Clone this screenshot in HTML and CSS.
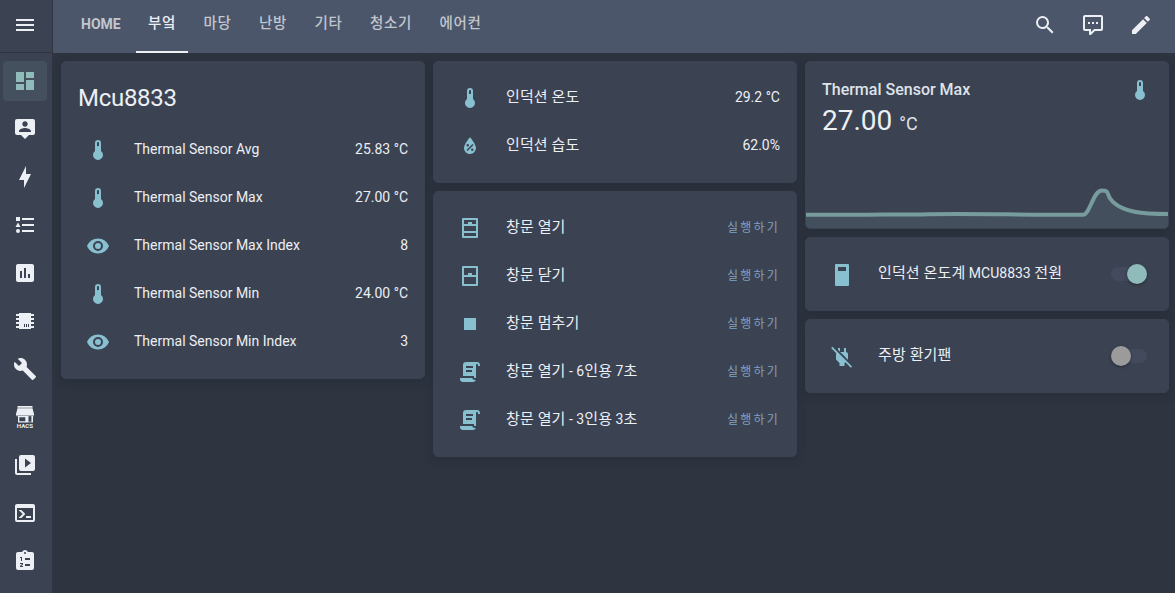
FILE: index.html
```
<!DOCTYPE html>
<html lang="ko">
<head>
    <meta charset="UTF-8">
    <meta name="viewport" content="width=device-width, initial-scale=1.0">
    <title>Home Assistant</title>
    <link rel="stylesheet" href="styles.css">
</head>
<body>
    <!-- shared icons -->
    <svg class="icon-defs">
        <symbol id="thermometer" viewBox="0 0 24 24"><path d="M15 13V5A3 3 0 0 0 9 5V13A5 5 0 1 0 15 13M12 4A1 1 0 0 1 13 5V8H11V5A1 1 0 0 1 12 4Z"/></symbol>
        <symbol id="eye" viewBox="0 0 24 24"><path d="M12,9A3,3 0 0,0 9,12A3,3 0 0,0 12,15A3,3 0 0,0 15,12A3,3 0 0,0 12,9M12,17A5,5 0 0,1 7,12A5,5 0 0,1 12,7A5,5 0 0,1 17,12A5,5 0 0,1 12,17M12,4.5C7,4.5 2.73,7.61 1,12C2.73,16.39 7,19.5 12,19.5C17,19.5 21.27,16.39 23,12C21.27,7.61 17,4.5 12,4.5Z"/></symbol>
        <symbol id="script" viewBox="0 0 24 24"><path d="M17.8,20C17.4,21.2 16.3,22 15,22H5C3.3,22 2,20.7 2,19V18H5L14.2,18C14.6,19.2 15.7,20 17,20H17.8M19,2C20.7,2 22,3.3 22,5V6H20V5C20,4.4 19.6,4 19,4C18.4,4 18,4.4 18,5V18H17C16.4,18 16,17.6 16,17V16H5V5C5,3.3 6.3,2 8,2H19M8,6V8H15V6H8M8,10V12H14V10H8Z"/></symbol>
    </svg>

    <div class="app">
        <aside class="sidebar">
            <div class="menu">
                <svg class="icon" viewBox="0 0 24 24"><path d="M3,6H21V8H3V6M3,11H21V13H3V11M3,16H21V18H3V16Z"/></svg>
            </div>
            <nav class="side-nav">
                <a class="side-item active"><svg class="icon" viewBox="0 0 24 24"><path d="M13,3V9H21V3M13,21H21V11H13M3,21H11V15H3M3,13H11V3H3V13Z"/></svg></a>
                <a class="side-item"><svg class="icon" viewBox="0 0 24 24"><path d="M20,2H4A2,2 0 0,0 2,4V16A2,2 0 0,0 4,18H8L12,22L16,18H20A2,2 0 0,0 22,16V4A2,2 0 0,0 20,2M12,4.3C13.5,4.3 14.7,5.5 14.7,7C14.7,8.5 13.5,9.7 12,9.7C10.5,9.7 9.3,8.5 9.3,7C9.3,5.5 10.5,4.3 12,4.3M18,15H6V14.1C6,12.1 10,11 12,11C14,11 18,12.1 18,14.1V15Z"/></svg></a>
                <a class="side-item"><svg class="icon" viewBox="0 0 24 24"><path d="M11 15H6L13 1V9H18L11 23V15Z"/></svg></a>
                <a class="side-item"><svg class="icon" viewBox="0 0 24 24"><path d="M5,9.5L7.5,14H2.5L5,9.5M3,4H7V8H3V4M5,20A2,2 0 0,0 7,18A2,2 0 0,0 5,16A2,2 0 0,0 3,18A2,2 0 0,0 5,20M9,5V7H21V5H9M9,19H21V17H9V19M9,13H21V11H9V13Z"/></svg></a>
                <a class="side-item"><svg class="icon" viewBox="0 0 24 24"><path d="M9 17H7V10H9V17M13 17H11V7H13V17M17 17H15V13H17V17M19 3H5C3.89 3 3 3.89 3 5V19C3 20.11 3.9 21 5 21H19C20.11 21 21 20.11 21 19V5C21 3.89 20.11 3 19 3Z"/></svg></a>
                <a class="side-item"><svg class="icon" viewBox="0 0 24 24"><path d="M6,4H18V5H21V7H18V9H21V11H18V13H21V15H18V17H21V19H18V20H6V19H3V17H6V15H3V13H6V11H3V9H6V7H3V5H6V4M11,15V18H12V15H11M13,15V18H14V15H13M15,15V18H16V15H15Z"/></svg></a>
                <a class="side-item"><svg class="icon" viewBox="0 0 24 24"><path d="M22.7,19L13.6,9.9C14.5,7.6 14,4.9 12.1,3C10.1,1 7.1,0.6 4.7,1.7L9,6L6,9L1.6,4.7C0.4,7.1 0.9,10.1 2.9,12.1C4.8,14 7.5,14.5 9.8,13.6L18.9,22.7C19.3,23.1 19.9,23.1 20.3,22.7L22.6,20.4C23.1,20 23.1,19.3 22.7,19Z"/></svg></a>
                <a class="side-item">
                    <svg class="icon" viewBox="0 0 24 24">
                        <path fill-rule="evenodd" d="M4.5,1H19.5V2.7H4.5ZM4.5,3.3H19.5L21,9V10H3V9ZM5,11H15.5V17.4H5ZM6.3,12.3V16.2H12.3V12.3ZM18.4,11H20V17.4H18.4Z"/>
                        <path class="shade" d="M3,10H21V11.2H3ZM15.5,16.4H18.4V17.4H15.5Z"/>
                        <text class="hacs" x="12" y="23.2">HACS</text>
                    </svg>
                </a>
                <a class="side-item"><svg class="icon" viewBox="0 0 24 24"><path d="M4,6H2V20A2,2 0 0,0 4,22H18V20H4V6M20,2H8A2,2 0 0,0 6,4V16A2,2 0 0,0 8,18H20A2,2 0 0,0 22,16V4A2,2 0 0,0 20,2M12,14.5V5.5L18,10L12,14.5Z"/></svg></a>
                <a class="side-item"><svg class="icon" viewBox="0 0 24 24"><path d="M20,19V7H4V19H20M20,3A2,2 0 0,1 22,5V19A2,2 0 0,1 20,21H4A2,2 0 0,1 2,19V5C2,3.89 2.9,3 4,3H20M13,17V15H18V17H13M9.58,13L5.57,9H8.4L11.7,12.3C12.09,12.69 12.09,13.33 11.7,13.72L8.42,17H5.59L9.58,13Z"/></svg></a>
                <a class="side-item">
                    <svg class="icon" viewBox="0 0 24 24">
                        <path fill-rule="evenodd" d="M19,3H14.82C14.4,1.84 13.3,1 12,1C10.7,1 9.6,1.84 9.18,3H5A2,2 0 0,0 3,5V19A2,2 0 0,0 5,21H19A2,2 0 0,0 21,19V5A2,2 0 0,0 19,3M12,3A1,1 0 0,1 12,5A1,1 0 0,1 12,3M12,9H17V11H12ZM12,15H17V17H12ZM7,8H9V12H8V9H7ZM7,14H10V15.6L8.3,17H10V18H7V17L9,15H7Z"/>
                    </svg>
                </a>
            </nav>
        </aside>

        <div class="main">
            <header class="toolbar">
                <nav class="tabs">
                    <a class="tab latin">HOME</a>
                    <a class="tab selected">부엌</a>
                    <a class="tab">마당</a>
                    <a class="tab">난방</a>
                    <a class="tab">기타</a>
                    <a class="tab">청소기</a>
                    <a class="tab">에어컨</a>
                </nav>
                <div class="actions">
                    <svg class="icon" viewBox="0 0 24 24"><path d="M9.5,3A6.5,6.5 0 0,1 16,9.5C16,11.11 15.41,12.59 14.44,13.73L14.71,14H15.5L20.5,19L19,20.5L14,15.5V14.71L13.73,14.44C12.59,15.41 11.11,16 9.5,16A6.5,6.5 0 0,1 3,9.5A6.5,6.5 0 0,1 9.5,3M9.5,5C7,5 5,7 5,9.5C5,12 7,14 9.5,14C12,14 14,12 14,9.5C14,7 12,5 9.5,5Z"/></svg>
                    <svg class="icon" viewBox="0 0 24 24"><path d="M9,22A1,1 0 0,1 8,21V18H4A2,2 0 0,1 2,16V4C2,2.89 2.9,2 4,2H20A2,2 0 0,1 22,4V16A2,2 0 0,1 20,18H13.9L10.2,21.71C10,21.9 9.75,22 9.5,22V22H9M10,16V19.08L13.08,16H20V4H4V16H10M17,11H15V9H17V11M13,11H11V9H13V11M9,11H7V9H9V11Z"/></svg>
                    <svg class="icon" viewBox="0 0 24 24"><path d="M20.71,7.04C21.1,6.65 21.1,6 20.71,5.63L18.37,3.29C18,2.9 17.35,2.9 16.96,3.29L15.12,5.12L18.87,8.87M3,17.25V21H6.75L17.81,9.93L14.06,6.18L3,17.25Z"/></svg>
                </div>
            </header>

            <main class="columns">
                <div class="column">
                    <section class="card">
                        <h1 class="card-title">Mcu8833</h1>
                        <div class="rows">
                            <div class="row"><span class="badge"><svg class="icon"><use href="#thermometer"/></svg></span><span class="name">Thermal Sensor Avg</span><span class="value">25.83 °C</span></div>
                            <div class="row"><span class="badge"><svg class="icon"><use href="#thermometer"/></svg></span><span class="name">Thermal Sensor Max</span><span class="value">27.00 °C</span></div>
                            <div class="row"><span class="badge"><svg class="icon"><use href="#eye"/></svg></span><span class="name">Thermal Sensor Max Index</span><span class="value">8</span></div>
                            <div class="row"><span class="badge"><svg class="icon"><use href="#thermometer"/></svg></span><span class="name">Thermal Sensor Min</span><span class="value">24.00 °C</span></div>
                            <div class="row"><span class="badge"><svg class="icon"><use href="#eye"/></svg></span><span class="name">Thermal Sensor Min Index</span><span class="value">3</span></div>
                        </div>
                    </section>
                </div>

                <div class="column">
                    <section class="card">
                        <div class="rows">
                            <div class="row"><span class="badge"><svg class="icon"><use href="#thermometer"/></svg></span><span class="name"><span class="ko">인덕션 온도</span></span><span class="value">29.2 °C</span></div>
                            <div class="row"><span class="badge"><svg class="icon" viewBox="0 0 24 24"><path d="M12,3.25C12,3.25 6,10 6,14C6,17.32 8.69,20 12,20A6,6 0 0,0 18,14C18,10 12,3.25 12,3.25M14.47,9.97L15.53,11.03L9.53,17.03L8.47,15.97M9.75,10A1.25,1.25 0 0,1 11,11.25A1.25,1.25 0 0,1 9.75,12.5A1.25,1.25 0 0,1 8.5,11.25A1.25,1.25 0 0,1 9.75,10M14.25,14.5A1.25,1.25 0 0,1 15.5,15.75A1.25,1.25 0 0,1 14.25,17A1.25,1.25 0 0,1 13,15.75A1.25,1.25 0 0,1 14.25,14.5Z"/></svg></span><span class="name"><span class="ko">인덕션 습도</span></span><span class="value">62.0%</span></div>
                        </div>
                    </section>
                    <section class="card">
                        <div class="rows">
                            <div class="row"><span class="badge"><svg class="icon" viewBox="0 0 24 24"><path fill-rule="evenodd" d="M5,2H19A1,1 0 0,1 20,3V21A1,1 0 0,1 19,22H5A1,1 0 0,1 4,21V3A1,1 0 0,1 5,2M6,4V8H10V6H14V8H18V4ZM6,10V15H18V10ZM6,17V20H18V17Z"/></svg></span><span class="name"><span class="ko">창문 열기</span></span><span class="run">실행하기</span></div>
                            <div class="row"><span class="badge"><svg class="icon" viewBox="0 0 24 24"><path fill-rule="evenodd" d="M5,2H19A1,1 0 0,1 20,3V21A1,1 0 0,1 19,22H5A1,1 0 0,1 4,21V3A1,1 0 0,1 5,2M6,4V11H10V9H14V11H18V4ZM6,13V20H18V13Z"/></svg></span><span class="name"><span class="ko">창문 닫기</span></span><span class="run">실행하기</span></div>
                            <div class="row"><span class="badge"><svg class="icon" viewBox="0 0 24 24"><path d="M18,18H6V6H18V18Z"/></svg></span><span class="name"><span class="ko">창문 멈추기</span></span><span class="run">실행하기</span></div>
                            <div class="row"><span class="badge"><svg class="icon"><use href="#script"/></svg></span><span class="name"><span class="ko">창문 열기</span> - 6<span class="ko">인용</span> 7<span class="ko">초</span></span><span class="run">실행하기</span></div>
                            <div class="row"><span class="badge"><svg class="icon"><use href="#script"/></svg></span><span class="name"><span class="ko">창문 열기</span> - 3<span class="ko">인용</span> 3<span class="ko">초</span></span><span class="run">실행하기</span></div>
                        </div>
                    </section>
                </div>

                <div class="column">
                    <section class="card sensor">
                        <div class="sensor-header">
                            <span class="sensor-name">Thermal Sensor Max</span>
                            <svg class="icon accent"><use href="#thermometer"/></svg>
                        </div>
                        <div class="sensor-value">27.00 <span class="unit">°C</span></div>
                        <svg class="graph" viewBox="0 0 362 46">
                            <path class="graph-fill" d="M0,32.5H277C284,32.5 287,8.5 296,8.5C305,8.5 299,13 307,20C318,30 335,32 362,32V46H0Z"/>
                            <path class="graph-line" d="M0,32.7H60C80,32.2 100,33 122,32.2C180,31.7 200,32.7 277,32.7C284,32.7 287,8.5 296,8.5C305,8.5 299,13 307,20C318,30 335,32 362,32"/>
                        </svg>
                    </section>
                    <section class="card">
                        <div class="rows">
                            <div class="row"><span class="badge low"><svg class="icon" viewBox="0 0 24 24"><path fill-rule="evenodd" d="M6,1H18A1,1 0 0,1 19,2V22A1,1 0 0,1 18,23H6A1,1 0 0,1 5,22V2A1,1 0 0,1 6,1M8,4V8H16V4Z"/></svg></span><span class="name"><span class="ko">인덕션 온도계</span> MCU8833 <span class="ko">전원</span></span><span class="switch on"><span class="thumb"></span></span></div>
                        </div>
                    </section>
                    <section class="card">
                        <div class="rows">
                            <div class="row"><span class="badge low"><svg class="icon" viewBox="0 0 24 24"><path d="M20.84 22.73L15.31 17.2L14.5 18V21H9.5V18L6 14.5V9C6 8.7 6.1 8.41 6.25 8.14L1.11 3L2.39 1.73L22.11 21.46L20.84 22.73M18 14.5V9C18 8 17 7 16 7V3H14V7H10.2L17.85 14.65L18 14.5M10 3H8V4.8L10 6.8V3Z"/></svg></span><span class="name"><span class="ko">주방 환기팬</span></span><span class="switch"><span class="thumb"></span></span></div>
                        </div>
                    </section>
                </div>
            </main>
        </div>
    </div>
</body>
</html>
```
FILE: styles.css
```
* {
    box-sizing: border-box;
}

body {
    margin: 0;
    background: #2e3440;
    color: #eceff4;
    font-family: Roboto, "Noto Sans CJK KR", sans-serif;
    font-size: 14px;
    overflow: hidden;
}

.icon-defs {
    display: none;
}

.icon {
    display: block;
    flex: none;
    width: 24px;
    height: 24px;
    fill: currentColor;
}

.app {
    display: flex;
    height: 100vh;
}

/* sidebar */
.sidebar {
    flex: none;
    width: 53px;
    background: #3b4252;
    border-right: 1px solid #2f3541;
}

.menu {
    height: 53px;
    padding: 13px;
    border-bottom: 1px solid #2f3541;
}

.side-nav {
    display: flex;
    flex-direction: column;
    gap: 8px;
    padding: 8px 5px 0 3px;
}

.side-item {
    display: flex;
    align-items: center;
    height: 40px;
    padding-left: 10px;
    border-radius: 4px;
}

.side-item.active {
    background: #45505e;
    color: #8fbcbb;
}

.hacs {
    font-size: 6.2px;
    font-weight: 700;
    text-anchor: middle;
}

.shade {
    opacity: 0.6;
}

/* top bar */
.main {
    flex: 1;
    min-width: 0;
}

.toolbar {
    display: flex;
    justify-content: space-between;
    height: 53px;
    padding: 0 22px 0 16px;
    background: #4c566a;
}

.tabs {
    display: flex;
    gap: 3.4px;
}

.tab {
    height: 53px;
    padding: 0 12px;
    line-height: 48px;
    font-size: 14.5px;
    font-weight: 500;
    letter-spacing: 0.7px;
    color: #c1c6cf;
    border-bottom: 2px solid transparent;
}

.tab.latin {
    font-size: 14px;
    font-weight: 700;
    letter-spacing: 0;
}

.tab.selected {
    color: #eceff4;
    border-bottom-color: #eceff4;
}

.actions {
    display: flex;
    gap: 24px;
    padding-top: 13px;
}

/* cards */
.columns {
    display: flex;
    gap: 8px;
    padding: 8px 6px 0 8px;
}

.column {
    display: flex;
    flex: 1;
    flex-direction: column;
    gap: 8px;
    min-width: 0;
}

.card {
    border: 1px solid #3b4252;
    border-radius: 5px;
    background: #3b4252;
    box-shadow: 0 2px 8px rgba(30, 42, 54, 0.5);
}

.card-title {
    height: 52px;
    margin: 0;
    padding: 12px 16px 0;
    line-height: 48px;
    font-size: 24px;
    font-weight: 400;
    letter-spacing: -0.288px;
}

.rows {
    display: flex;
    flex-direction: column;
    gap: 8px;
    padding: 16px;
}

.row {
    display: flex;
    align-items: center;
    height: 40px;
}

.badge {
    display: flex;
    justify-content: center;
    width: 40px;
    margin-right: 16px;
    color: #88c0d0;
}

.badge.low {
    padding-top: 2px;
}

.name {
    flex: 1;
    padding-bottom: 2px;
    line-height: 20px;
}

.value {
    padding-bottom: 2px;
}

.ko {
    font-size: 15px;
    letter-spacing: 0.12px;
}

.run {
    padding-bottom: 3px;
    font-size: 12px;
    letter-spacing: 2.2px;
    color: #81a1c1;
}

/* sensor graph */
.sensor {
    display: flex;
    flex-direction: column;
    height: 168px;
    overflow: hidden;
}

.sensor-header {
    display: flex;
    justify-content: space-between;
    padding: 16px 16px 0;
}

.sensor-name {
    line-height: 24px;
    font-size: 16px;
    font-weight: 500;
    color: #dfe3ea;
}

.accent {
    color: #88c0d0;
}

.sensor-value {
    padding: 0 16px;
    line-height: 38px;
    font-size: 28px;
}

.unit {
    font-size: 18px;
    color: #dfe3ea;
}

.graph {
    display: block;
    width: 362px;
    height: 46px;
    margin-top: auto;
}

.graph-fill {
    fill: #434f5d;
}

.graph-line {
    fill: none;
    stroke: #789b9e;
    stroke-width: 4;
}

/* switches */
.switch {
    display: flex;
    align-items: center;
    width: 36px;
    height: 14px;
    margin-right: 5px;
    border-radius: 7px;
    background: #434a5e;
}

.thumb {
    width: 20px;
    height: 20px;
    border-radius: 50%;
    background: #9b9b9b;
    box-shadow: 0 1px 3px rgba(0, 0, 0, 0.4);
}

.switch.on {
    justify-content: flex-end;
}

.switch.on .thumb {
    background: #8fbcbb;
}
```
